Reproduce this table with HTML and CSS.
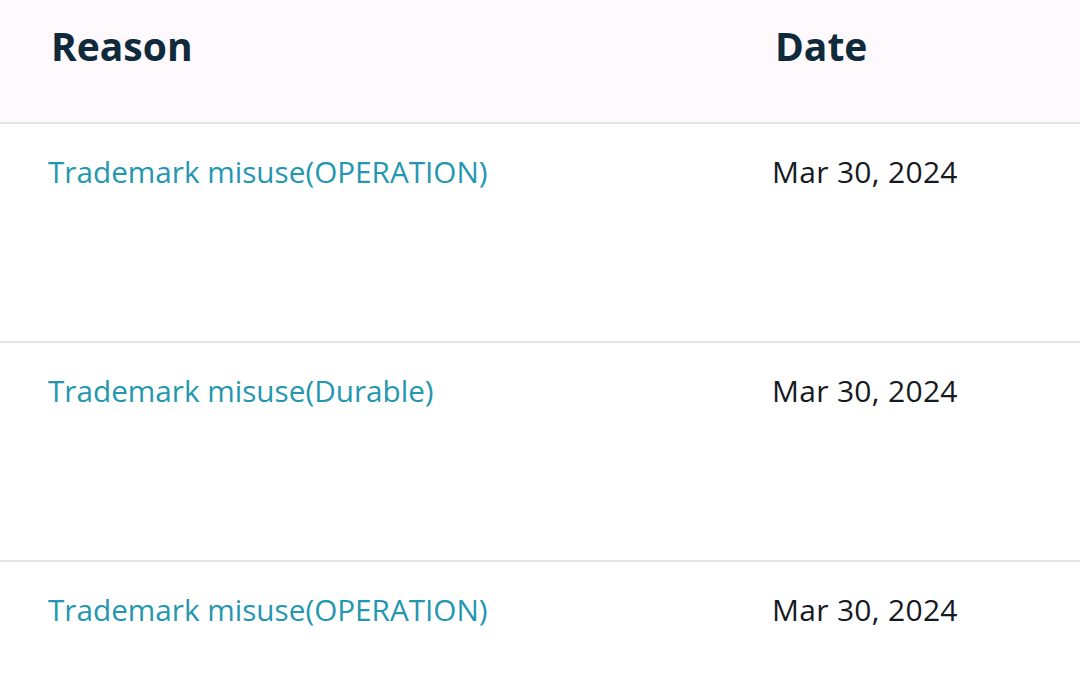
FILE: index.html
```html
<!DOCTYPE html>
<html>
<head>
<meta charset="utf-8">
<link rel="stylesheet" href="styles.css">
</head>
<body>
<div class="table">
  <div class="row head">
    <div class="c1">Reason</div>
    <div class="c2">Date</div>
  </div>
  <div class="row">
    <div class="c1"><a class="link">Trademark misuse(OPERATION)</a></div>
    <div class="c2">Mar 30, 2024</div>
  </div>
  <div class="row">
    <div class="c1"><a class="link">Trademark misuse(Durable)</a></div>
    <div class="c2">Mar 30, 2024</div>
  </div>
  <div class="row">
    <div class="c1"><a class="link">Trademark misuse(OPERATION)</a></div>
    <div class="c2">Mar 30, 2024</div>
  </div>
</div>
</body>
</html>
```
FILE: styles.css
```css
html, body { margin: 0; padding: 0; background: #fff; }
body { font-family: "Open Sans", "Noto Sans", sans-serif; width: 1080px; height: 684px; overflow: hidden; }
.table { display: flex; flex-direction: column; }
.row { display: grid; grid-template-columns: 724px 1fr; height: 219px; flex-shrink: 0; border-bottom: 2px solid #e5e4e6; box-sizing: border-box; }
.head { height: 124px; background: #fdf9fd; font-weight: 700; font-size: 39px; line-height: 52px; color: #0f2a3a; }
.head .c1 { padding: 20px 0 0 51px; }
.head .c2 { padding: 20px 0 0 51px; }
.row:not(.head) { font-size: 29.7px; line-height: 40px; color: #16191f; }
.row:not(.head) .c1 { padding: 28px 0 0 48px; }
.row:not(.head) .c2 { padding: 28px 0 0 48px; letter-spacing: 0.3px; font-size: 30px; }
.link { color: #2497b0; }
```
